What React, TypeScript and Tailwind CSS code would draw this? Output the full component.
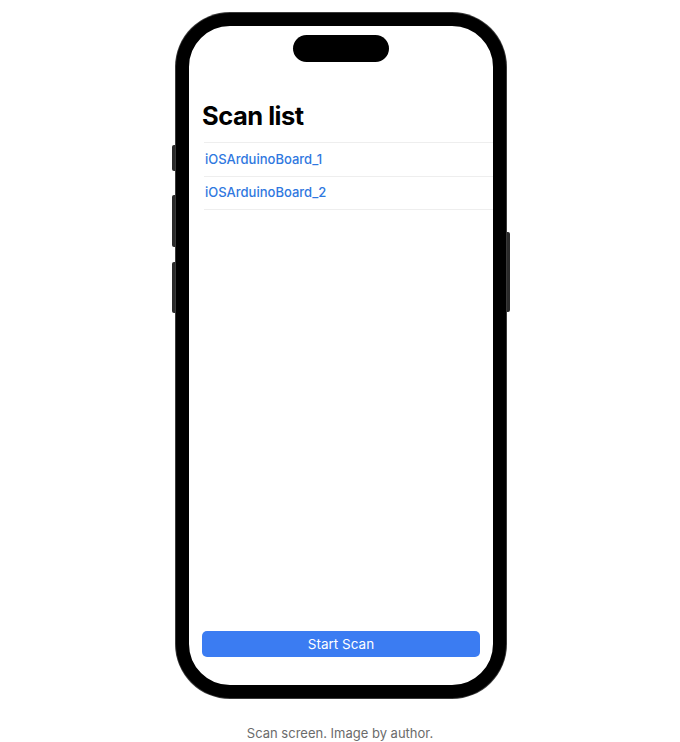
export default function App() {
  const devices = ["iOSArduinoBoard_1", "iOSArduinoBoard_2"];

  return (
    <div className="min-h-screen w-full bg-white font-['Inter','Liberation_Sans',sans-serif]">
      <div className="flex flex-col items-center pt-[13px]">
        {/* phone frame */}
        <div className="relative ml-[2px] h-[685px] w-[330px]">
          {/* side buttons */}
          <div className="absolute left-[-4px] top-[132px] h-[26px] w-[5px] rounded-l-[2px] bg-[#2a2a2a]" />
          <div className="absolute left-[-4px] top-[182px] h-[52px] w-[5px] rounded-l-[2px] bg-[#2a2a2a]" />
          <div className="absolute left-[-4px] top-[249px] h-[51px] w-[5px] rounded-l-[2px] bg-[#2a2a2a]" />
          <div className="absolute right-[-4px] top-[219px] h-[80px] w-[5px] rounded-r-[2px] bg-[#2a2a2a]" />

          <div className="relative flex h-full w-full flex-col overflow-hidden rounded-[54px] border-[13px] border-black bg-white shadow-[0_0_0_1px_#3a3a3a]">
            {/* dynamic island */}
            <div className="absolute left-1/2 top-[9px] h-[27px] w-[96px] -translate-x-1/2 rounded-full bg-black" />

            <div className="flex flex-1 flex-col">
              <h1 className="pl-[13px] pt-[74px] text-[25.5px] font-bold leading-[32px] tracking-[-0.5px] text-black">
                Scan list
              </h1>
              <ul className="ml-[15px] mt-[10px] border-t border-[#eeeeee]">
                {devices.map((d) => (
                  <li
                    key={d}
                    className="flex h-[33.5px] items-center border-b border-[#eeeeee] pl-[1px] text-[13px] font-medium text-[#2f78e0]"
                  >
                    {d}
                  </li>
                ))}
              </ul>
            </div>

            <div className="px-[13px] pb-[28px]">
              <button className="flex h-[26px] w-full items-center justify-center rounded-[5px] bg-[#3b7cf2] pt-[1px] text-[13.5px] text-white">
                Start Scan
              </button>
            </div>
          </div>
        </div>

        <p className="mt-[26px] text-[13px] text-[#6b6b6b]">Scan screen. Image by author.</p>
      </div>
    </div>
  );
}
